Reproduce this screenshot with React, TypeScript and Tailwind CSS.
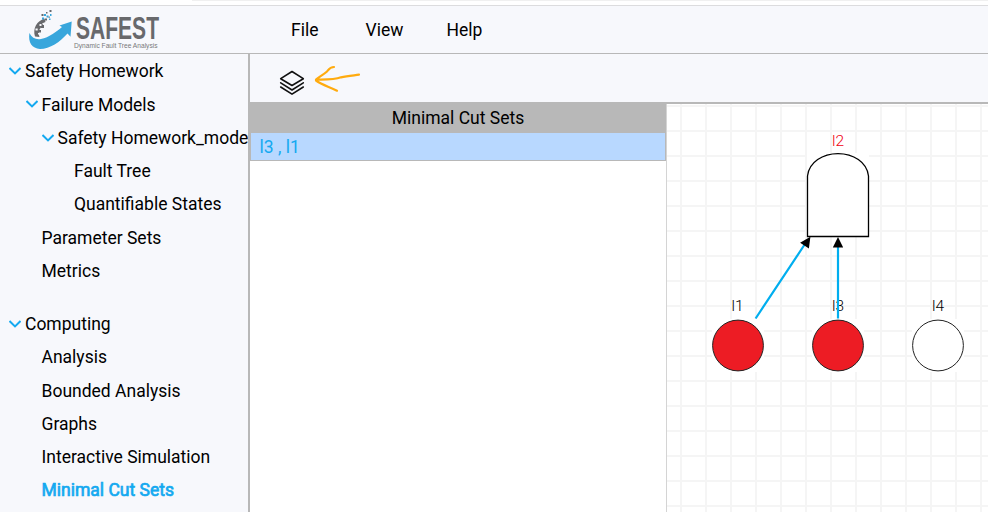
import React from 'react';

type Item = { label: string; pad: string; open?: boolean; active?: boolean };

const project: Item[] = [
  { label: 'Safety Homework', pad: 'pl-[9px]', open: true },
  { label: 'Failure Models', pad: 'pl-[25.5px]', open: true },
  { label: 'Safety Homework_mode', pad: 'pl-[41.5px]', open: true },
  { label: 'Fault Tree', pad: 'pl-[74px]' },
  { label: 'Quantifiable States', pad: 'pl-[74px]' },
  { label: 'Parameter Sets', pad: 'pl-[41.5px]' },
  { label: 'Metrics', pad: 'pl-[41.5px]' },
];

const computing: Item[] = [
  { label: 'Computing', pad: 'pl-[9px]', open: true },
  { label: 'Analysis', pad: 'pl-[41.5px]' },
  { label: 'Bounded Analysis', pad: 'pl-[41.5px]' },
  { label: 'Graphs', pad: 'pl-[41.5px]' },
  { label: 'Interactive Simulation', pad: 'pl-[41.5px]' },
  { label: 'Minimal Cut Sets', pad: 'pl-[41.5px]', active: true },
];

function TreeRow({ label, pad, open, active }: Item) {
  return (
    <li className={`flex h-[33.25px] items-center whitespace-nowrap ${pad} ${active ? 'text-[#14a9f0] [-webkit-text-stroke:0.7px_#14a9f0]' : ''}`}>
      {open && (
        <svg className="mb-0.5 mr-1 h-3 w-3 shrink-0" viewBox="0 0 12 12" fill="none" stroke="#14a9f0" strokeWidth="2">
          <path d="M0.5 3 6 8.4 11.5 3" />
        </svg>
      )}
      <span>{label}</span>
    </li>
  );
}

function Logo() {
  return (
    <svg className="h-[47px] w-[170px] overflow-visible" viewBox="0 6 170 47">
      <path d="M44.5 18.5C37 21 32.5 28 35 36.5L39.5 37C38 32 39 28 43.5 25.5L42 23.5L45.5 22Z" fill="#68696c" />
      <path d="M41 25h3v3h-3zM38 30h3v2.5h-3z" fill="#68696c" />
      <path d="M35.5 28.5h2.2v2h-2.2zM39.5 24h2v2h-2zM38 33h1.5v1.5H38z" fill="#f7f8fc" />
      <path d="M41.5 14h2v2h-2zM45 18.5h2v2h-2zM48.5 16.5h1.3v1.3h-1.3zM49.5 10h2v2h-2zM46 12h1.5v1.5H46z" fill="#68696c" />
      <path d="M44 14h2v2h-2zM46.5 15.5h2v2h-2zM50 14h1.5v2H50zM42 17.5h2v2h-2zM49 18.5h1.5V20H49z" fill="#38a6dc" />
      <path d="M29.4 33C32 38 36 40 41 39C49 37.5 56 32 62 27L59.5 25.5L71.7 21.5L70.5 36.7L67.5 33.5C60 42 50 49 40 49C32 48 28 43 29.4 33Z" fill="#38a6dc" />
      <text x="76" y="39.2" fontFamily="'Liberation Sans', Arial, sans-serif" fontSize="30.5" fontWeight="700" fill="#68696c" textLength="83" lengthAdjust="spacingAndGlyphs">SAFEST</text>
      <text x="74" y="48" fontFamily="'Liberation Sans', Arial, sans-serif" fontSize="7" fill="#77787b" textLength="83.5" lengthAdjust="spacingAndGlyphs">Dynamic Fault Tree Analysis</text>
    </svg>
  );
}

function Diagram() {
  return (
    <svg className="block h-[408px] w-[321px] font-['Roboto',sans-serif]" viewBox="667 104 321 408">
      <defs>
        <pattern id="grid" x="680" y="105" width="25" height="25" patternUnits="userSpaceOnUse">
          <path d="M1 0V25M0 1H25" stroke="#f5f5f5" strokeWidth="2" />
        </pattern>
      </defs>
      <rect x="667" y="104" width="321" height="408" fill="url(#grid)" />
      <rect x="807" y="153" width="62" height="84" fill="#fff" />
      <path d="M807.5 236.5V176C809 162 823 153.6 838 153.6S867 162 868.5 176V236.5Z" fill="#fff" stroke="#000" strokeWidth="1.3" />
      {[738, 838, 938].map((x) => (
        <g key={x}>
          <rect x={x - 26} y="319" width="52" height="53" fill="#fff" />
          <circle cx={x} cy="345.5" r="25.4" fill={x === 938 ? '#fff' : '#ed1c24'} stroke="#222" strokeWidth="1" />
        </g>
      ))}
      <g fontSize="15.5" fontWeight="300" textAnchor="middle" fill="#000">
        <text x="838" y="146" fill="#f00010">l2</text>
        <text x="737.5" y="311">l1</text>
        <text x="838" y="311">l3</text>
        <text x="938" y="311">l4</text>
      </g>
      <path d="M755.6 318.5 805 244M838 318.5V246" stroke="#00aeef" strokeWidth="2.2" />
      <path d="M810.4 236.8 808.9 248.5 800.1 242.7ZM838 237 843.2 247.6H832.8Z" fill="#000" />
    </svg>
  );
}

export default function App() {
  return (
    <div className="flex h-[512px] w-[988px] flex-col overflow-hidden bg-white font-['Roboto',sans-serif] text-[17.5px] leading-none text-black">
      <div className="flex h-[6px] shrink-0 justify-end border-b border-[#dcdcde]">
        <div className="h-px w-[796px] bg-[#f0f0f0]" />
      </div>
      <header className="flex h-12 shrink-0 items-center border-b border-[#b8b8b8] bg-[#f7f8fc]">
        <Logo />
        <nav className="flex items-center pl-[121px] pt-0.5">
          <span className="w-[74.5px]">File</span>
          <span className="w-[81px]">View</span>
          <span>Help</span>
        </nav>
      </header>
      <div className="flex min-h-0 flex-1">
        <aside className="w-[250px] shrink-0 overflow-hidden border-r-2 border-[#b8b8b8] bg-[#f7f8fc] pt-[1.6px]">
          <ul>{project.map((item) => <TreeRow key={item.label} {...item} />)}</ul>
          <ul className="pt-5">{computing.map((item) => <TreeRow key={item.label} {...item} />)}</ul>
        </aside>
        <main className="flex min-w-0 flex-1 flex-col">
          <div className="flex h-[50px] shrink-0 items-start border-b-2 border-[#b8b8b8] bg-[#f7f8fc] pl-7 pt-[9px]">
            <svg className="h-9 w-[90px]" viewBox="278 63 90 36" fill="none" strokeLinejoin="round" strokeLinecap="round">
              <g stroke="#111" strokeWidth="1.6">
                <path d="M292 71.5 303.3 78.7 292 85.5 280.7 78.7Z" />
                <path d="M280.7 82.8 292 90 303.3 82.8" />
                <path d="M280.7 87 292 94.2 303.3 87" />
              </g>
              <path d="M334 67C330 67 329 69 327 71.5C323 75 319 77 316 79.6C327 79.5 334 80 341 77.3C347 76 353 75.5 359 74.7M316 80.5C322 85 330 87 337 90.7" stroke="#ffab0f" strokeWidth="2.2" />
            </svg>
          </div>
          <div className="flex min-h-0 flex-1">
            <section className="w-[417px] shrink-0 border-r border-[#d4d4d4]">
              <h2 className="flex h-[29px] items-center justify-center bg-[#b8b8b8]">Minimal Cut Sets</h2>
              <div className="flex h-7 items-center border-x border-b border-[#b8b8b8] bg-[#b8d8ff] pl-[8.5px] pt-0.5 text-[#14a9f0]">l3 , l1</div>
            </section>
            <Diagram />
          </div>
        </main>
      </div>
    </div>
  );
}
